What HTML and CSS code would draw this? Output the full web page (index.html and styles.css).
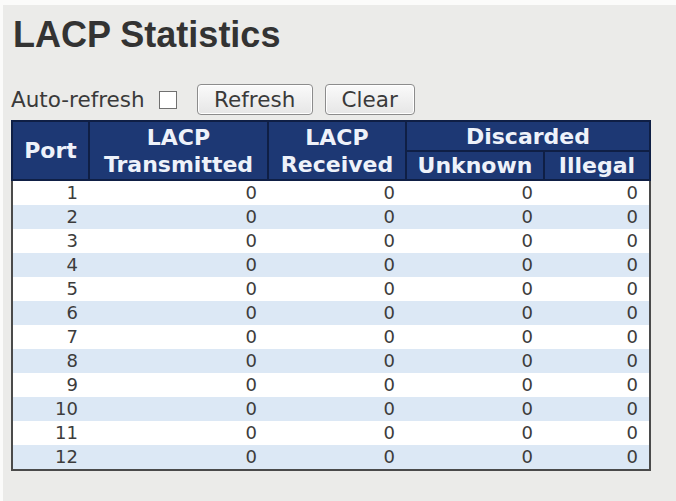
FILE: index.html
```html
<!DOCTYPE html>
<html>
<head>
<meta charset="utf-8">
<link rel="stylesheet" href="styles.css">
</head>
<body>
<div class="page">
  <h1 class="title">LACP Statistics</h1>
  <div class="toolbar">
    <span class="label">Auto-refresh</span>
    <span class="checkbox"></span>
    <button class="btn btn-refresh">Refresh</button>
    <button class="btn btn-clear">Clear</button>
  </div>
  <table class="stats">
    <colgroup>
      <col class="c-port"><col class="c-tx"><col class="c-rx"><col class="c-unk"><col class="c-ill">
    </colgroup>
    <thead>
      <tr class="h1row">
        <th rowspan="2" class="hport">Port</th>
        <th rowspan="2" class="h2line">LACP<br>Transmitted</th>
        <th rowspan="2" class="h2line">LACP<br>Received</th>
        <th colspan="2" class="hdisc">Discarded</th>
      </tr>
      <tr class="h2row">
        <th class="hsub">Unknown</th>
        <th class="hsub">Illegal</th>
      </tr>
    </thead>
    <tbody>
      <tr><td class="port">1</td><td>0</td><td>0</td><td>0</td><td>0</td></tr>
      <tr><td class="port">2</td><td>0</td><td>0</td><td>0</td><td>0</td></tr>
      <tr><td class="port">3</td><td>0</td><td>0</td><td>0</td><td>0</td></tr>
      <tr><td class="port">4</td><td>0</td><td>0</td><td>0</td><td>0</td></tr>
      <tr><td class="port">5</td><td>0</td><td>0</td><td>0</td><td>0</td></tr>
      <tr><td class="port">6</td><td>0</td><td>0</td><td>0</td><td>0</td></tr>
      <tr><td class="port">7</td><td>0</td><td>0</td><td>0</td><td>0</td></tr>
      <tr><td class="port">8</td><td>0</td><td>0</td><td>0</td><td>0</td></tr>
      <tr><td class="port">9</td><td>0</td><td>0</td><td>0</td><td>0</td></tr>
      <tr><td class="port">10</td><td>0</td><td>0</td><td>0</td><td>0</td></tr>
      <tr><td class="port">11</td><td>0</td><td>0</td><td>0</td><td>0</td></tr>
      <tr><td class="port">12</td><td>0</td><td>0</td><td>0</td><td>0</td></tr>
    </tbody>
  </table>
</div>
</body>
</html>
```

FILE: styles.css
```css
html, body {
  margin: 0;
  padding: 0;
  background: #fbfbfa;
}
body {
  padding: 5px 0 0 3px;
  width: 676px;
  height: 501px;
  box-sizing: border-box;
  overflow: hidden;
}
.page {
  background: #ebebe9;
  height: 496px;
  padding: 0 0 0 8px;
  box-sizing: border-box;
  font-family: "DejaVu Sans", Verdana, sans-serif;
  color: #3a3a3a;
}
.title {
  margin: 0;
  padding: 10px 0 0 2px;
  font-family: "Liberation Sans", Arial, sans-serif;
  font-weight: bold;
  font-size: 36px;
  line-height: 40px;
  color: #333333;
}
.toolbar {
  display: flex;
  align-items: center;
  margin-top: 29px;
  height: 31px;
}
.label {
  font-size: 21.5px;
  color: #3a3a3a;
}
.checkbox {
  width: 16px;
  height: 16px;
  border: 1px solid #707070;
  background: #ffffff;
  margin-left: 14px;
  margin-right: 20px;
}
.btn {
  font-family: "DejaVu Sans", Verdana, sans-serif;
  font-size: 21.5px;
  color: #3a3a3a;
  height: 31px;
  border: 1px solid #8c8c8c;
  border-radius: 4px;
  background: linear-gradient(#fafafa, #e6e6e6);
  padding: 0;
  box-shadow: inset 0 0 0 1px #ffffff;
}
.btn-refresh { width: 116px; }
.btn-clear { width: 90px; margin-left: 12px; }

.stats {
  margin-top: 5px;
  border-collapse: collapse;
  border: 2px solid #4a4a4a;
  table-layout: fixed;
  width: 638px;
}
.c-port { width: 77px; }
.c-tx { width: 179px; }
.c-rx { width: 138px; }
.c-unk { width: 138px; }
.c-ill { width: 106px; }
.stats th {
  background: #1d3874;
  color: #eef2fa;
  font-weight: bold;
  font-size: 22px;
  border: 2px solid #0f1f45;
  padding: 0;
  text-align: center;
  line-height: 27px;
}
.h1row th { height: 28px; }
.h2row th { height: 27px; }
.stats td {
  font-size: 18px;
  line-height: 20px;
  height: 24px;
  padding: 0 11px 0 0;
  text-align: right;
  color: #3c3c3c;
}
.stats tbody tr:nth-child(odd) td { background: #ffffff; }
.stats tbody tr:nth-child(even) td { background: #dce8f5; }
```
